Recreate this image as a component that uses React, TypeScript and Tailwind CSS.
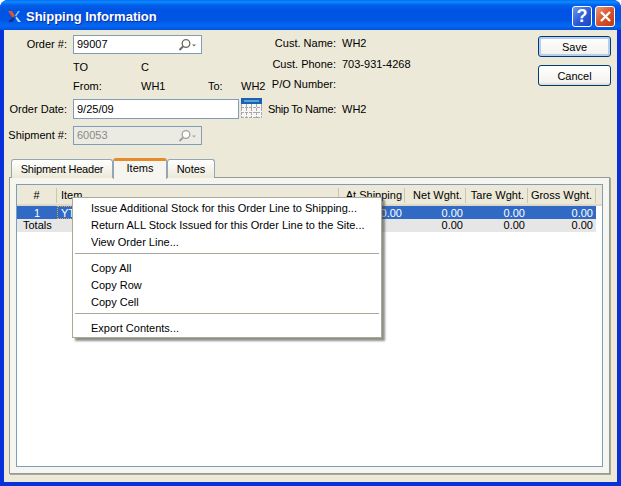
const font = { fontFamily: '"Liberation Sans", Tahoma, sans-serif' };

function Magnifier({ muted }: { muted?: boolean }) {
  const c = muted ? "#a3a396" : "#6b6b5e";
  return (
    <svg width="20" height="12" viewBox="0 0 20 12" className="shrink-0">
      <circle cx="10" cy="4.500" r="3.800" fill="#fff" stroke={c} strokeWidth="1.300" />
      <path d="M7 7.500 L3.500 11" stroke={c} strokeWidth="2" />
      <path d="M16 5.500h4l-2 2z" fill={c} />
    </svg>
  );
}

function Lookup({ value, disabled }: { value: string; disabled?: boolean }) {
  return (
    <div
      className={
        "flex h-[19px] w-[129px] items-center justify-between border border-[#7f9db9] pl-[3px] pr-[5px] " +
        (disabled ? "bg-[#ebebe4] text-[#8a8a80]" : "bg-white text-black")
      }
    >
      <span>{value}</span>
      <Magnifier muted={disabled} />
    </div>
  );
}

function Calendar() {
  return (
    <svg width="21" height="20" viewBox="0 0 21 20" className="ml-[2px] shrink-0 -translate-y-[1px] self-start">
      <rect x="0" y="0" width="21" height="20" fill="#f6f6f4" />
      <rect x="0" y="0" width="21" height="6" fill="#1d5fb0" />
      <rect x="3" y="2" width="15" height="2" fill="#4fa8d0" />
      <path
        d="M0.500 6v14M5.500 6v14M10.500 6v14M15.500 6v14M20.500 6v14M0 9.500h21M0 14.500h21M0 19.500h21"
        stroke="#a8a8aa"
        strokeWidth="1"
        strokeDasharray="3 1"
      />
    </svg>
  );
}

function InfoRow({
  label,
  value,
  className,
  labelClass,
}: {
  label: string;
  value?: string;
  className: string;
  labelClass?: string;
}) {
  return (
    <div className={"flex h-[13px] items-center " + className}>
      <span className={"w-[74px] whitespace-nowrap text-right " + (labelClass ?? "")}>{label}</span>
      <span className="ml-[6px]">{value}</span>
    </div>
  );
}

function XpButton({ label, focused }: { label: string; focused?: boolean }) {
  return (
    <button
      className={
        "h-[21px] w-[73px] rounded-[3px] border border-[#003c74] bg-[linear-gradient(#ffffff,#f4f3ee_85%,#dcd8ca)] pt-[1px] text-center text-black " +
        (focused ? "shadow-[inset_0_0_0_2px_#b6cdf0]" : "")
      }
    >
      {label}
    </button>
  );
}

const columns = [
  { label: "#", width: "w-[40px]", align: "text-center" },
  { label: "Item", width: "w-[282px]", align: "text-left pl-[4px]" },
  { label: "At Shipping", width: "w-[66px]", align: "text-right pr-[2px]" },
  { label: "Net Wght.", width: "w-[61px]", align: "text-right pr-[3px]" },
  { label: "Tare Wght.", width: "w-[62px]", align: "text-right pr-[3px]" },
  { label: "Gross Wght.", width: "w-[68px]", align: "text-right pr-[3px]" },
];

function Cell({ width, children, className }: { width: string; children?: string; className?: string }) {
  return <div className={width + " text-right pr-[3px] " + (className ?? "")}>{children}</div>;
}

function MenuItem({ label }: { label: string }) {
  return <div className="flex h-[17px] items-center pl-[18px]">{label}</div>;
}

function MenuSeparator() {
  return <div className="mx-[2px] my-[2px] h-[1px] bg-[#aca899]" />;
}

export default function App() {
  return (
    <div
      className="relative flex h-[486px] w-[621px] flex-col overflow-hidden rounded-t-[8px] bg-[#0831d9] text-[11px] leading-[13px] text-black"
      style={font}
    >
      <div className="flex h-[30px] shrink-0 items-center bg-[linear-gradient(#0a6cf5_0px,#0a8cff_2px,#0460ea_5px,#0054e3_10px,#0055e5_20px,#0468f2_26px,#0250dc_30px)] pl-[8px] pr-[6px] pt-[3px]">
        <svg width="13" height="12" viewBox="0 0 13 12" className="shrink-0">
          <path d="M0 0h4l3 5-2.500 1.500z" fill="#e0552a" />
          <path d="M0 11l4.500-4.500 2 1-2 3.500z" fill="#1c2f80" />
          <path d="M12 0h-2L7 4.500l1 1z" fill="#7cc4f4" />
          <path d="M13 11h-3L7.500 7l1-1.500z" fill="#b8e0fa" />
        </svg>
        <span className="ml-[5px] text-[13px] font-bold text-white [text-shadow:1px_1px_0_#0f2f9f]">
          Shipping Information
        </span>
        <div className="ml-auto flex gap-[3px]">
          <div className="flex h-[21px] w-[20px] items-center justify-center rounded-[3px] border border-white bg-[linear-gradient(135deg,#6f96ee,#2a5bd7_55%,#1a48c4)] text-[18px] font-bold text-white">
            ?
          </div>
          <div className="flex h-[21px] w-[20px] items-center justify-center rounded-[3px] border border-white bg-[linear-gradient(135deg,#e89a7e,#d8532c_50%,#c13a10)]">
            <svg width="13" height="13" viewBox="0 0 13 13">
              <path d="M2 2l9 9M11 2l-9 9" stroke="#fff" strokeWidth="2.400" />
            </svg>
          </div>
        </div>
      </div>

      <div className="ml-[4px] mr-[4px] mb-[4px] flex min-h-0 flex-1 flex-col bg-[#ece9d8]">
        <div className="flex h-[127px] shrink-0">
          <div className="w-[258px] shrink-0 pt-[5px]">
            <div className="flex items-center">
              <span className="w-[63px] whitespace-nowrap text-right">Order #:</span>
              <span className="ml-[6px]">
                <Lookup value="99007" />
              </span>
            </div>
            <div className="mt-[7px] flex h-[13px] items-center pl-[69px]">
              <span className="w-[68px] shrink-0">TO</span>
              <span>C</span>
            </div>
            <div className="mt-[6px] flex h-[13px] items-center pl-[69px]">
              <span className="w-[68px] shrink-0">From:</span>
              <span className="w-[67px] shrink-0">WH1</span>
              <span className="w-[33px] shrink-0">To:</span>
              <span className="shrink-0">WH2</span>
            </div>
            <div className="mt-[6px] flex items-center">
              <span className="w-[63px] shrink-0 whitespace-nowrap text-right">Order Date:</span>
              <div className="ml-[6px] flex h-[20px] w-[166px] shrink-0 items-center border border-[#7f9db9] bg-white pl-[3px]">
                9/25/09
              </div>
              <Calendar />
            </div>
            <div className="mt-[7px] flex items-center">
              <span className="w-[63px] whitespace-nowrap text-right">Shipment #:</span>
              <span className="ml-[6px]">
                <Lookup value="60053" disabled />
              </span>
            </div>
          </div>

          <div className="pt-[7px]">
            <InfoRow label="Cust. Name:" value="WH2" className="" />
            <InfoRow label="Cust. Phone:" value="703-931-4268" className="mt-[8px]" />
            <InfoRow label="P/O Number:" className="mt-[7px]" />
            <InfoRow
              label="Ship To Name:"
              value="WH2"
              className="mt-[12px]"
              labelClass="tracking-[-0.3px]"
            />
          </div>

          <div className="ml-auto mr-[6px] flex flex-col gap-[8px] pt-[6px]">
            <XpButton label="Save" focused />
            <XpButton label="Cancel" />
          </div>
        </div>

        <div className="relative z-10 -mb-px flex h-[21px] shrink-0 items-start pl-[7px] pt-[1px]">
          <div className="mt-[1px] flex h-[19px] w-[102px] items-center justify-center rounded-t-[3px] border border-b-0 border-[#91a7b4] bg-[linear-gradient(#ffffff,#ece9d8)] tracking-[-0.2px]">
            Shipment Header
          </div>
          <div className="flex h-[21px] w-[54px] items-center justify-center rounded-t-[3px] border-x border-[#91a7b4] border-t-[3px] border-t-[#e68b2c] bg-[#f7f5f0] pb-[3px]">
            Items
          </div>
          <div className="mt-[1px] flex h-[19px] w-[48px] items-center justify-center rounded-t-[3px] border border-b-0 border-[#91a7b4] bg-[linear-gradient(#ffffff,#ece9d8)]">
            Notes
          </div>
        </div>

        <div className="ml-[5px] mr-[7px] mb-[8px] flex min-h-0 flex-1 flex-col border border-[#919b9c] bg-[#f7f5f0] p-[6px] shadow-[1px_1px_0_#aca899]">
          <div className="min-h-0 flex-1 border border-[#7f9db9] bg-white">
            <div className="flex h-[21px] border-b-[2px] border-b-[#dcd9c8] bg-[#ece9d8]">
              {columns.map((col) => (
                <div
                  key={col.label}
                  className={
                    col.width +
                    " " +
                    col.align +
                    " mt-[3px] h-[15px] whitespace-nowrap border-r border-r-[#c9c6b4] leading-[15px]"
                  }
                >
                  {col.label}
                </div>
              ))}
            </div>
            <div className="flex h-[13px] w-[579px] items-center bg-[#316ac5] pt-[1px] text-white">
              <div className="w-[40px] text-center">1</div>
              <div className="-mt-[1px] h-[13px] w-[282px] border border-dotted border-[#e8a040] pl-[3px] leading-[12px]">
                YT
              </div>
              <Cell width="w-[66px]">0.00</Cell>
              <Cell width="w-[61px]">0.00</Cell>
              <Cell width="w-[62px]">0.00</Cell>
              <Cell width="w-[68px]">0.00</Cell>
            </div>
            <div className="flex h-[13px] w-[579px] items-center bg-[#e6e6e6]">
              <div className="w-[322px] pl-[6px]">Totals</div>
              <Cell width="w-[66px]" />
              <Cell width="w-[61px]">0.00</Cell>
              <Cell width="w-[62px]">0.00</Cell>
              <Cell width="w-[68px]">0.00</Cell>
            </div>
          </div>
        </div>
      </div>

      <div className="absolute left-[72px] top-[197px] w-[310px] border border-[#aca899] bg-white pt-[2px] shadow-[3px_3px_2px_rgba(70,70,60,0.6)]">
        <MenuItem label="Issue Additional Stock for this Order Line to Shipping..." />
        <MenuItem label="Return ALL Stock Issued for this Order Line to the Site..." />
        <MenuItem label="View Order Line..." />
        <MenuSeparator />
        <div className="h-[4px]" />
        <MenuItem label="Copy All" />
        <MenuItem label="Copy Row" />
        <MenuItem label="Copy Cell" />
        <MenuSeparator />
        <div className="h-[4px]" />
        <MenuItem label="Export Contents..." />
      </div>
    </div>
  );
}
